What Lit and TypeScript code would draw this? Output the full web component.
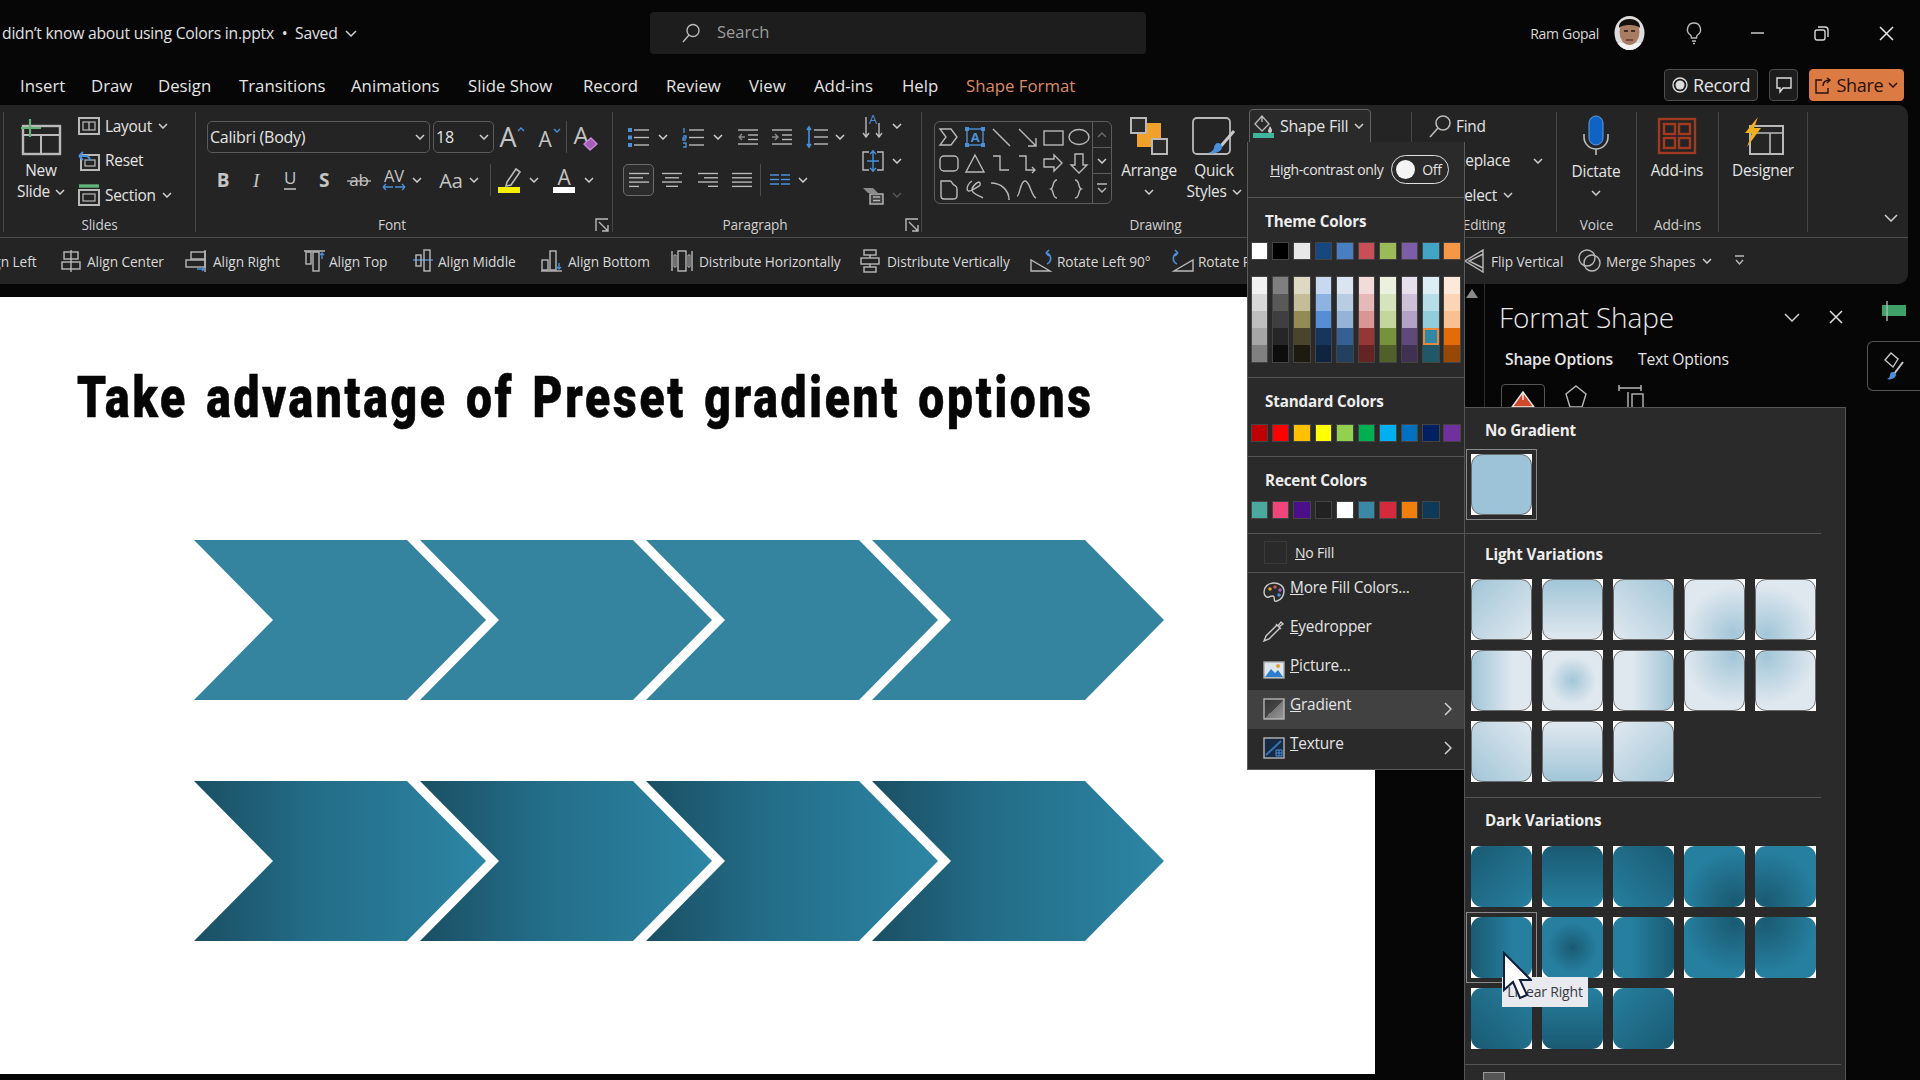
import { LitElement, html, css, svg, TemplateResult } from 'lit';
import { customElement } from 'lit/decorators.js';

const ic = (w: number, h: number, body: unknown) =>
  html`<svg class="ic" width=${w} height=${h} viewBox=${`0 0 ${w} ${h}`}>${body}</svg>`;
const chev = html`<svg class="chev" width="10" height="6" viewBox="0 0 10 6"><path d="M1 1l4 4 4-4"/></svg>`;
const cell = (w: number, c: unknown = '') => html`<span class="cell" style="width:${w}px">${c}</span>`;
const glyph = (t: string, x: number, y: number, size: number, extra = '') =>
  svg`<text x=${x} y=${y} font-size=${size} font-family="Open Sans" text-anchor="middle" fill="#c4c4c4" stroke="none" style=${extra}>${t}</text>`;
const BLUE = '#4a90d9';
const lines = (x: number, ws: number[], y0: number, st: number) =>
  ws.map((w, i) => svg`<path d=${`M${x} ${y0 + i * st}h${w}`}/>`);

// ribbon icons
const icons: Record<string, TemplateResult> = {
  newSlide: ic(42, 38, svg`<rect x="3" y="9" width="37" height="28" stroke-width="2.4"/><path d="M3 18h37M21 18v19" stroke-width="2"/><path d="M10 2v18M1 11h20" stroke="#62b37a" stroke-width="2.2"/>`),
  layout: ic(22, 18, svg`<rect x="1" y="1" width="20" height="16" stroke-width="2"/><rect x="5" y="5" width="12" height="8" stroke-width="1.2"/><path d="M11 5v8"/>`),
  reset: ic(22, 20, svg`<rect x="3" y="4" width="18" height="15" stroke-width="2"/><rect x="7" y="9" width="10" height="6" stroke-width="1.2"/><path d="M1 5l4-4M1 5l4 4M1 5h6q5 0 5 5" stroke=${BLUE} stroke-width="1.8"/>`),
  section: ic(22, 22, svg`<path d="M1 2h20" stroke="#62b37a" stroke-width="3.4"/><rect x="1" y="6" width="20" height="15" stroke-width="2"/><rect x="5" y="10" width="12" height="7" stroke-width="1.2"/>`),
  bullets: ic(22, 21, svg`${lines(7, [15, 15, 15], 3, 7.5)}<path d="M1 1h4v4H1zM1 8.5h4v4H1zM1 16h4v4H1z" fill=${BLUE} stroke="none"/>`),
  numbers: ic(22, 21, svg`${lines(7, [15, 15, 15], 3, 7.5)}<path d="M2 1v5M1 9h3v2H1v2h3M1 16h3v4H1" stroke=${BLUE}/>`),
  indentL: ic(22, 18, svg`${lines(1, [20], 2, 0)}${lines(11, [10, 10], 7, 4.5)}${lines(1, [20], 16, 0)}<path d="M8 9H2m3-3L2 9l3 3" stroke="#8a8a8a"/>`),
  indentR: ic(22, 18, svg`${lines(1, [20], 2, 0)}${lines(11, [10, 10], 7, 4.5)}${lines(1, [20], 16, 0)}<path d="M1 9h6m-3-3 3 3-3 3" stroke="#8a8a8a"/>`),
  spacing: ic(22, 22, svg`${lines(8, [14, 14, 14], 4, 7)}<path d="M3 1v20M1 4l2-3 2 3M1 18l2 3 2-3" stroke=${BLUE} stroke-width="1.6"/>`),
  textDir: ic(22, 26, svg`<path d="M4 4v20M1 20l3 4 3-4M17 10v14M14 20l3 4 3-4"/>${glyph('A', 11, 11, 13, 'fill:#4a90d9')}`),
  alignText: ic(22, 24, svg`<path d="M7 3H1v18h6M15 3h6v18h-6"/><path d="M11 1v22M8 5l3-3 3 3M8 19l3 3 3-3M5 12h12" stroke=${BLUE}/>`),
  smart: ic(22, 20, svg`<path d="M1 3h10l5 5H6z" fill="#8a8a8a" stroke="none"/><rect x="8" y="9" width="13" height="10" fill="#444"/>${lines(11, [7, 7], 12, 3.5)}`),
  aLeft: ic(22, 16, lines(1, [20, 14, 20, 10], 1.5, 4.3)),
  aCenter: ic(22, 16, lines(1, [20], 1.5, 0).concat(lines(4, [14], 5.8, 0), lines(1, [20], 10, 0), lines(5, [12], 14.3, 0))),
  aRight: ic(22, 16, lines(1, [20], 1.5, 0).concat(lines(7, [14], 5.8, 0), lines(1, [20], 10, 0), lines(11, [10], 14.3, 0))),
  aJust: ic(22, 16, lines(1, [20, 20, 20, 20], 1.5, 4.3)),
  cols: ic(22, 12, svg`<g stroke=${BLUE} stroke-width="1.5">${lines(1, [9, 9, 9], 1, 4.5)}${lines(12, [9, 9, 9], 1, 4.5)}</g>`),
  arrange: ic(38, 38, svg`<rect x="7" y="6" width="24" height="24" fill="#f0a02b" stroke="none"/><rect x="1" y="1" width="15" height="15" fill="#2b2b2b" stroke-width="2"/><rect x="22" y="22" width="15" height="15" fill="#2b2b2b" stroke-width="2"/>`),
  quick: ic(44, 38, svg`<rect x="1" y="1" width="37" height="36" rx="4" stroke-width="1.8"/><path d="M42 14 29 29" stroke="#c8c8c8" stroke-width="3"/><path d="M26 26c4 0 5 4 3 7-3 3-8 4-13 3 3-1 5-2 6-5 0-3 2-5 4-5z" fill=${BLUE} stroke="none"/>`),
  fill: ic(21, 24, svg`<path d="M9 2 2 10l7 7 7-7zM9 2v6"/><path d="M17 12c2 3 2 4 2 5a2 2 0 0 1-4 0c0-1 1-3 2-5z" fill="#c9c9c9" stroke="none"/><rect x="0" y="19" width="21" height="5" fill="#3fb59b" stroke="none"/>`),
  find: ic(22, 24, svg`<circle cx="14" cy="9" r="7" stroke-width="1.6"/><path d="M9 14 1 23" stroke-width="1.6"/>`),
  mic: ic(26, 40, svg`<rect x="6" y="1" width="14" height="29" rx="7" fill="#0f63c4" stroke="#5d9adf" stroke-width="1"/><path d="M1 19v3a12 12 0 0 0 24 0v-3M13 34v6" stroke="#bcbcbc" stroke-width="1.6"/>`),
  addins: ic(40, 38, svg`<g stroke="#a33a20" stroke-width="2.4"><rect x="2" y="2" width="36" height="34"/><rect x="7" y="7" width="11" height="10"/><rect x="22" y="7" width="11" height="10"/><rect x="7" y="21" width="11" height="10"/><rect x="22" y="21" width="11" height="10"/></g>`),
  designer: ic(42, 38, svg`<rect x="8" y="9" width="33" height="28" stroke-width="2"/><path d="M8 16h33M28 16v21" stroke-width="1.6"/><path d="M16 0 3 16h7L5 30l14-19h-7z" fill="#f2b01e" stroke="none"/>`),
};

const shapes = [
  svg`<path d="M2 3h11l6 8-6 8H2l6-8z"/>`,
  svg`<g stroke=${BLUE}><rect x="3" y="3" width="16" height="16"/></g><path d="M1 1h4v4H1zM17 1h4v4h-4zM1 17h4v4H1zM17 17h4v4h-4z" fill=${BLUE} stroke="none"/>${glyph('A', 11, 16, 13, 'fill:#4a90d9;font-weight:700')}`,
  svg`<path d="M3 3l17 17"/>`, svg`<path d="M3 3l17 17M20 12v8h-8"/>`,
  svg`<rect x="2" y="5" width="19" height="14"/>`, svg`<ellipse cx="11" cy="11" rx="10" ry="7.5"/>`,
  svg`<rect x="2" y="4" width="18" height="15" rx="4"/>`, svg`<path d="M11 3l9 17H2z"/>`,
  svg`<path d="M3 4h7v14h9"/>`, svg`<path d="M3 4h7v14h9M16 15l3 3-3 3"/>`,
  svg`<path d="M2 7h10V3l8 8-8 8v-4H2z"/>`, svg`<path d="M7 2h8v11h4l-8 8-8-8h4z"/>`,
  svg`<path d="M3 3h9c2 0 2 3 4 4s3 1 3 4v7c0 2-2 3-4 3H6c-2 0-3-1-3-3z"/>`, svg`<path d="M8 3c-6 4-7 13 0 9s9-4 8-7-8 3-8 7 8 6 11 8"/>`,
  svg`<path d="M1 5c9 0 18 6 18 17"/>`, svg`<path d="M1 18c3 0 3-15 8-15s6 15 11 17"/>`,
  svg`<path d="M15 2c-5 0-3 8-6 9 3 1 1 9 6 9"/>`, svg`<path d="M7 2c5 0 3 8 6 9-3 1-1 9-6 9"/>`,
];

type QatItem = { label: string; x: number; text: number; icon: unknown };
const rect = (x: number, y: number, w: number, h: number) => svg`<rect x=${x} y=${y} width=${w} height=${h}/>`;
const qat: QatItem[] = [
  { label: 'Align Left', x: -22, text: -22, icon: '' },
  { label: 'Align Center', x: 61, text: 87, icon: svg`<path d="M10 1v22"/>${rect(3, 3, 14, 7)}${rect(1, 13, 18, 7)}` },
  { label: 'Align Right', x: 186, text: 213, icon: svg`<path d="M19 1v22"/>${rect(5, 3, 14, 7)}${rect(0, 11, 19, 7)}<path d="M11 20h7m-2-2 2 2-2 2" stroke=${BLUE}/>` },
  { label: 'Align Top', x: 304, text: 329, icon: svg`<path d="M0 2h21"/>${rect(2, 3, 5, 12)}${rect(9, 3, 6, 19)}<path d="M18 10V4m-2 2 2-2 2 2" stroke=${BLUE}/>` },
  { label: 'Align Middle', x: 413, text: 438, icon: svg`<path d="M0 11h20" stroke=${BLUE}/>${rect(3, 6, 5, 11)}${rect(11, 1, 6, 21)}` },
  { label: 'Align Bottom', x: 541, text: 568, icon: svg`<path d="M0 22h21"/>${rect(1, 11, 6, 10)}${rect(9, 2, 6, 19)}<path d="M18 14v6m-2-2 2 2 2-2" stroke=${BLUE}/>` },
  { label: 'Distribute Horizontally', x: 671, text: 699, icon: svg`<path d="M1 2v20M21 2v20"/>${rect(7, 2, 8, 20)}<path d="M3 6h2v12H3zM17 6h2v12h-2z" stroke-width="1"/>` },
  { label: 'Distribute Vertically', x: 860, text: 887, icon: svg`${rect(4, 1, 12, 5)}${rect(1, 9, 18, 6)}${rect(4, 18, 12, 5)}<path d="M10 6v3M10 15v3"/>` },
  { label: 'Rotate Left 90°', x: 1030, text: 1057, icon: svg`<path d="M1 22h19L1 11z"/><path d="M16 4c6 1 6 9 1 11M16 4l3-3M16 4l3 3" stroke=${BLUE} stroke-width="1.6"/>` },
  { label: 'Rotate Right 90°', x: 1172, text: 1198, icon: svg`<path d="M21 22H2l19-11z"/><path d="M6 4C0 5 0 13 5 15M6 4 3 1M6 4 3 7" stroke=${BLUE} stroke-width="1.6"/>` },
  { label: 'Flip Vertical', x: 1463, text: 1491, icon: svg`<path d="M20 1v22L2 12zM20 5 6 12l14 7"/>` },
  { label: 'Merge Shapes', x: 1578, text: 1606, icon: svg`<circle cx="9" cy="9" r="8"/><circle cx="14" cy="14" r="8"/>` },
];

const tabs = [['Insert', 20], ['Draw', 91], ['Design', 158], ['Transitions', 239], ['Animations', 351], ['Slide Show', 468], ['Record', 583], ['Review', 666], ['View', 749], ['Add-ins', 814], ['Help', 902], ['Shape Format', 966]] as const;

const theme = ['#fff', '#000', '#e8e8e8', '#17477f', '#4a7ec2', '#c94f56', '#9bbb59', '#7b5ea7', '#41a5c6', '#f79646'];
const shades = [
  ['#f2f2f2', '#d9d9d9', '#bfbfbf', '#a6a6a6', '#808080'], ['#7f7f7f', '#595959', '#3f3f3f', '#262626', '#0d0d0d'],
  ['#ddd9c3', '#c4bd97', '#948a54', '#4a452a', '#1d1b10'], ['#c6d9f1', '#8db3e2', '#558ed5', '#17365d', '#0f243e'],
  ['#dbe5f1', '#b8cce4', '#95b3d7', '#366092', '#244061'], ['#f2dcdb', '#e5b9b7', '#d99694', '#953734', '#632423'],
  ['#ebf1de', '#d7e3bc', '#c3d69b', '#76923c', '#4f6128'], ['#e5e0ec', '#ccc1d9', '#b2a2c7', '#5f497a', '#3f3151'],
  ['#dbeef3', '#b7dde8', '#92cddc', '#31849b', '#205867'], ['#fde9d9', '#fbd5b5', '#fac08f', '#e36c09', '#974806'],
];
const standard = ['#c00000', '#ff0000', '#ffc000', '#ffff00', '#92d050', '#00b050', '#00b0f0', '#0070c0', '#002060', '#7030a0'];
const recent = ['#4aa89c', '#f0457a', '#4b0f8a', '#222222', '#ffffff', '#3a87a6', '#d42a3c', '#f07f0c', '#0f3a57'];

// 13 preset directions, in gallery order
const variations = (a: string, b: string) => [
  `linear-gradient(135deg,${a},${b})`, `linear-gradient(180deg,${a},${b})`, `linear-gradient(225deg,${a},${b})`,
  `radial-gradient(circle at 82% 92%,${a},${b} 68%)`, `radial-gradient(circle at 18% 92%,${a},${b} 68%)`,
  `linear-gradient(90deg,${a},${b} 70%)`, `radial-gradient(circle at 50% 50%,${a},${b} 58%)`, `linear-gradient(270deg,${a},${b} 70%)`,
  `radial-gradient(circle at 82% 8%,${a},${b} 68%)`, `radial-gradient(circle at 18% 8%,${a},${b} 68%)`,
  `linear-gradient(45deg,${a},${b})`, `linear-gradient(0deg,${a},${b})`, `linear-gradient(315deg,${a},${b})`,
];

const chevronRow = (fill: string) => svg`${[0, 1, 2, 3].map((i) => {
  const l = 226 * i;
  return svg`<polygon fill=${fill} points=${`${l},0 ${l + 213},0 ${l + 292},80 ${l + 213},160 ${l},160 ${l + 79},80`}/>`;
})}`;

@customElement('app-root')
export class AppRoot extends LitElement {
  static styles = css`
    :host { display: block; width: 1920px; height: 1080px; position: relative; overflow: hidden; background: #060606; color: #e4e4e4; font-family: 'Open Sans', 'Noto Sans', sans-serif; font-size: 15px; }
    svg { display: block; flex: none; }
    .ic { fill: none; stroke: #b9b9b9; stroke-width: 1.4; overflow: visible; }
    .chev { fill: none; stroke: #cfcfcf; stroke-width: 1.5; }

    .titlebar { height: 66px; display: flex; align-items: center; }
    .doc { width: 650px; padding-left: 2px; box-sizing: border-box; font-size: 15.7px; letter-spacing: -0.22px; color: #e0e0e0; display: flex; align-items: center; gap: 4px; white-space: pre; }
    .search { width: 496px; height: 42px; background: #1d1d1d; border-radius: 4px; display: flex; align-items: center; padding: 0 0 4px 32px; box-sizing: border-box; gap: 17px; color: #9c9c9c; font-size: 16.5px; }
    .search svg { margin-top: 3px; }
    .user { margin-left: auto; display: flex; align-items: center; font-size: 14px; color: #d8d8d8; letter-spacing: -0.3px; }
    .avatar { margin: 0 0 0 14px; }
    .bulb { margin-left: 40px; }
    .win { display: flex; margin-left: 49px; gap: 50px; padding-right: 26px; align-items: center; }

    .tabbar { height: 39px; display: flex; align-items: flex-start; position: relative; font-size: 16.8px; letter-spacing: 0; }
    .tabs { display: flex; width: 1664px; height: 32px; line-height: 40px; }
    .tab { flex: none; white-space: nowrap; }
    .tab.on { color: #dd8a6a; }
    .actions { display: flex; gap: 11px; margin-top: 3px; font-size: 18px; letter-spacing: -0.3px; }
    .btn { height: 32px; border: 1px solid #4d4d4d; background: #1d1d1d; border-radius: 4px; display: flex; align-items: center; justify-content: center; box-sizing: border-box; gap: 5px; }
    .btn.rec { width: 94px; }
    .btn.cmt { width: 29px; }
    .btn.share { width: 95px; background: #dc7a44; border-color: #dc7a44; color: #2a1208; }
    .btn.share .chev { stroke: #2a1208; }

    .ribbon { width: 1908px; height: 133px; background: #242424; border-radius: 0 10px 0 0; border-bottom: 1px solid #4c4c4c; box-sizing: border-box; padding: 7px 0 0 3px; display: flex; font-size: 15.4px; letter-spacing: -0.25px; }
    .group { flex: none; height: 120px; border-left: 1px solid #454545; box-sizing: border-box; display: flex; flex-direction: column; }
    .g-slides { width: 192px; }
    .g-font { width: 417px; }
    .g-para { width: 309px; }
    .g-draw { width: 490px; }
    .g-edit { width: 145px; }
    .g-voice { width: 80px; }
    .g-addin { width: 82px; }
    .g-design { width: 90px; border-right: 1px solid #454545; }
    .body { height: 106px; display: flex; flex: none; }
    .label { height: 14px; line-height: 14px; text-align: center; font-size: 13.6px; letter-spacing: -0.1px; color: #cfcfcf; position: relative; }
    .label.left { padding-right: 24px; }
    .launch { position: absolute; right: 3px; top: 0; }
    .big { display: flex; flex-direction: column; align-items: center; text-align: center; line-height: 21px; padding-top: 5px; box-sizing: border-box; flex: none; }
    .big .pic { height: 38px; margin-bottom: 5px; display: flex; align-items: flex-end; }
    .big .down { display: flex; justify-content: center; align-items: center; height: 21px; }
    .inl { display: inline-flex; align-items: center; gap: 5px; }
    .stack { display: flex; flex-direction: column; gap: 6.5px; }
    .srow { height: 28px; display: flex; align-items: center; gap: 5px; white-space: nowrap; }
    .srow svg.chev { margin-left: 1px; }
    .cell { flex: none; display: inline-flex; align-items: center; justify-content: center; }
    .frow { display: flex; align-items: center; height: 32px; }
    .rows { display: flex; flex-direction: column; gap: 11px; padding-top: 9px; }
    .vsep { width: 1px; height: 32px; background: #4c4c4c; flex: none; }
    .combo { height: 32px; border: 1px solid #5a5a5a; border-radius: 5px; box-sizing: border-box; display: flex; align-items: center; justify-content: space-between; padding: 0 4px 0 2px; font-size: 16px; flex: none; }
    .combo.font { width: 223px; margin-right: 3px; }
    .combo.size { width: 61px; }
    .selected { height: 32px; border: 1.5px solid #6c6c6c; border-radius: 5px; box-sizing: border-box; background: #2c2c2c; }
    .gallery { width: 178px; height: 83px; margin: 9px 0 0 12px; border: 1px solid #5c5c5c; border-radius: 6px; box-sizing: border-box; display: flex; flex: none; }
    .gal-grid { flex: 1; display: grid; grid-template-columns: repeat(6, 26px); grid-auto-rows: 26px; padding: 2px 0 0 1px; }
    .gal-grid span { display: flex; align-items: center; justify-content: center; }
    .gal-side { width: 21px; border-left: 1px solid #5c5c5c; display: grid; grid-template-rows: 26px 26px 1fr; }
    .gal-side span { display: flex; align-items: center; justify-content: center; border-bottom: 1px solid #5c5c5c; }
    .gal-side span:last-child { border-bottom: 0; }
    .fillbtn { width: 122px; height: 35px; border: 1px solid #636363; border-radius: 4px 4px 0 0; box-sizing: border-box; margin: -3px 0 0 7px; display: flex; align-items: center; gap: 6px; padding: 0 0 2px 3px; background: #2a2a2a; flex: none; font-size: 16px; }
    .collapse { align-self: flex-end; margin: 0 0 15px 76px; }

    .qat { width: 1908px; height: 46px; background: #242424; border-radius: 0 0 10px 0; position: relative; overflow: hidden; font-size: 13.7px; letter-spacing: -0.08px; color: #d8d8d8; }
    .q { position: absolute; top: 0; height: 46px; display: flex; align-items: center; white-space: nowrap; }
    .q span { position: absolute; }
    .work { display: flex; height: 796px; }
    .slide { width: 1375px; height: 777px; margin-top: 13px; background: #fff; flex: none; display: flex; flex-direction: column; overflow: hidden; }
    .slide h1 { margin: 71px 0 112px 77px; height: 60px; line-height: 60px; font-family: Roboto, 'Liberation Sans', sans-serif; font-weight: 900; font-size: 57px; letter-spacing: 3.4px; word-spacing: 5px; color: #060606; -webkit-text-stroke: 0.6px #060606; white-space: nowrap; transform: scaleX(0.81); transform-origin: left center; }
    .chevrons { margin-left: 194px; flex: none; }
    .chevrons + .chevrons { margin-top: 81px; }
    .gutter { width: 109px; flex: none; padding: 5px 0 0 91px; box-sizing: border-box; }
    .tri { width: 0; height: 0; border: 6px solid transparent; border-top: 0; border-bottom: 9px solid #8a8a8a; }
    .pane { width: 383px; flex: none; border-left: 1px solid #2e2e2e; box-sizing: border-box; padding: 12px 0 0 14px; }
    .pane-head { display: flex; align-items: center; height: 42px; font-size: 28px; font-weight: 300; letter-spacing: -0.1px; color: #e8e8e8; padding-right: 24px; }
    .pane-head .x { margin-left: 29px; }
    .pane-head .v { margin-left: auto; }
    .pane-tabs { display: flex; height: 40px; align-items: center; margin-top: 1px; padding-left: 6px; font-size: 15.7px; letter-spacing: -0.2px; }
    .pane-tabs b { width: 133px; font-weight: 600; }
    .pane-icons { display: flex; align-items: flex-start; gap: 19px; margin-top: 5px; padding-left: 2px; height: 40px; }
    .pane-icons .cur { width: 44px; height: 44px; border: 1px solid #555; border-radius: 4px; box-sizing: border-box; display: flex; justify-content: center; padding-top: 6px; }
    .pane-icons .sz { margin-left: 9px; }
    .rail { flex: 1; padding-top: 17px; }
    .rail-a { display: flex; justify-content: center; height: 40px; align-items: flex-start; }
    .rail-b { height: 50px; border: 1px solid #555; border-right: 0; border-radius: 6px 0 0 6px; box-sizing: border-box; display: flex; justify-content: center; align-items: center; }

    .menu { position: absolute; left: 1247px; top: 142px; width: 218px; height: 628px; background: #2a2a2a; border: 1px solid #5a5a5a; border-top: 0; box-sizing: border-box; font-size: 15.4px; letter-spacing: -0.2px; }
    .hc { height: 56px; display: flex; align-items: center; padding-left: 22px; gap: 8px; font-size: 14px; letter-spacing: -0.35px; border-bottom: 1px solid #555; box-sizing: border-box; }
    .toggle { width: 58px; height: 29px; border: 1.5px solid #e0e0e0; border-radius: 15px; box-sizing: border-box; display: flex; align-items: center; padding-left: 4px; gap: 7px; font-size: 14px; }
    .knob { width: 19px; height: 19px; background: #f4f4f4; border-radius: 50%; }
    .mhead { height: 45px; line-height: 46px; padding-left: 17px; font-weight: 700; font-size: 15.2px; letter-spacing: -0.15px; color: #eee; }
    .mhead.tall { height: 46.5px; }
    .sw { display: grid; grid-template-columns: repeat(10, 15.5px); column-gap: 5.95px; padding-left: 3.5px; }
    .sw i { display: block; height: 16px; outline: 1px solid #444; }
    .shade { display: grid; grid-template-columns: repeat(10, 15.5px); column-gap: 5.95px; padding: 18px 0 0 3.5px; }
    .shade div { outline: 1px solid #444; }
    .shade i { display: block; height: 17px; }
    .shade i.mark { outline: 2px solid #e8883a; outline-offset: -2px; background: #2e88a8 !important; }
    .sec { border-bottom: 1px solid #555; padding-bottom: 15px; }
    .nofill { height: 39px; border-bottom: 1px solid #555; display: flex; align-items: center; padding-left: 16px; gap: 8px; box-sizing: border-box; font-size: 14px; }
    .nofill i { width: 21px; height: 21px; border: 1px solid #3a3a3a; }
    .item { height: 39px; display: flex; align-items: center; padding: 0 12px 0 15px; }
    .item span { padding: 0 0 10px 5px; flex: 1; }
    .item.hot { background: #414141; }
    .arrow { fill: none; stroke: #d0d0d0; stroke-width: 1.5; }

    .submenu { position: absolute; left: 1464px; top: 407px; width: 382px; height: 673px; background: #2a2a2a; border: 1px solid #555; border-bottom: 0; box-sizing: border-box; padding-left: 6px; overflow: hidden; }
    .shead { height: 44px; line-height: 44px; padding-left: 14px; font-weight: 700; font-size: 15.2px; letter-spacing: -0.15px; color: #eee; }
    .shead.n { margin-top: -2px; height: 42px; }
    .grid { display: grid; grid-template-columns: repeat(5, 61px); gap: 10px; margin-top: 5px; }
    .grid.dk { margin-top: 4px; }
    .tile { width: 61px; height: 61px; background: #fff; }
    .tile i { display: block; width: 100%; height: 100%; border-radius: 11px; box-sizing: border-box; }
    .tile.lt i { border: 1.5px solid #6b6b6b; }
    .tile.sel { outline: 1px solid #8a8a8a; outline-offset: 4px; }
    .hr { height: 1px; background: #555; width: 356px; margin-left: -6px; }
    .first { margin: 2px 0 18px; }
    .lv { margin-top: 15px; }
    .hr.full { width: 376px; }
    .tail { margin: 7px 0 0 12px; width: 20px; height: 14px; border: 1.5px solid #9a9a9a; background: #555; }
    .tooltip { position: absolute; left: 1502px; top: 977px; width: 86px; height: 30px; background: #e9e9f0; color: #3a3a3a; font-size: 14px; line-height: 30px; text-align: center; letter-spacing: -0.2px; }
    .cursor { position: absolute; left: 1502px; top: 951px; }
  `;

  private renderRibbon() {
    const launcher = ic(14, 14, svg`<path d="M1 13V1h12M4 4l9 9M7 13h6V7"/>`);
    return html`<div class="ribbon">
      <div class="group g-slides">
        <div class="body">
          <div class="big" style="width:66px;margin-left:4px">
            <div class="pic">${icons.newSlide}</div>New<span class="inl">Slide ${chev}</span>
          </div>
          <div class="stack" style="margin-left:4px">
            <div class="srow">${icons.layout}Layout ${chev}</div>
            <div class="srow">${icons.reset}Reset</div>
            <div class="srow">${icons.section}Section ${chev}</div>
          </div>
        </div>
        <div class="label">Slides</div>
      </div>
      <div class="group g-font">
        <div class="body" style="padding-left:11px">
          <div class="rows">
            <div class="frow">
              <div class="combo font">Calibri (Body) ${chev}</div>
              <div class="combo size">18 ${chev}</div>
              ${cell(36, ic(32, 28, svg`${glyph('A', 12, 24, 27)}<path d="M22 8l3-3 3 3" stroke=${BLUE}/>`))}
              ${cell(36, ic(30, 24, svg`${glyph('A', 12, 22, 21)}<path d="M21 4l3 3 3-3" stroke=${BLUE}/>`))}
              <span class="vsep"></span>
              ${cell(36, ic(30, 28, svg`${glyph('A', 11, 21, 24)}<path d="M21 15l6 6-7 6-6-6z" fill="#a35fb5" stroke="#c988d8"/>`))}
            </div>
            <div class="frow">
              ${cell(32, ic(14, 20, glyph('B', 7, 17, 19, 'font-weight:700')))}
              ${cell(34, ic(14, 20, glyph('I', 7, 17, 19, 'font-style:italic;font-family:Liberation Serif')))}
              ${cell(34, ic(16, 22, svg`${glyph('U', 8, 15, 17)}<path d="M2 20h12" stroke-width="1.6"/>`))}
              ${cell(34, ic(14, 20, glyph('S', 7, 17, 19, 'font-weight:700')))}
              ${cell(36, ic(24, 20, svg`${glyph('ab', 12, 16, 17)}<path d="M0 11h24"/>`))}
              ${cell(33, ic(24, 24, svg`${glyph('AV', 12, 14, 16.5)}<path d="M1 19h10M1 19l3-3M1 19l3 3M13 19h10M23 19l-3-3M23 19l-3 3" stroke=${BLUE}/>`))}
              ${cell(14, chev)}${cell(10)}
              ${cell(34, ic(30, 22, glyph('Aa', 15, 19, 20)))}
              ${cell(12, chev)}${cell(10)}
              <span class="vsep"></span>${cell(6)}
              ${cell(25, ic(23, 26, svg`<path d="M9 15 18 2l4 3-9 13-5 1z" stroke-width="1.6"/><rect x="0" y="20" width="22" height="6" fill="#f5f000" stroke="none"/>`))}
              ${cell(5)}${cell(14, chev)}${cell(12)}
              ${cell(22, ic(22, 26, svg`${glyph('A', 11, 18, 21)}<rect x="0" y="20" width="22" height="6" fill="#fff" stroke="none"/>`))}
              ${cell(7)}${cell(14, chev)}
            </div>
          </div>
        </div>
        <div class="label left">Font<span class="launch">${launcher}</span></div>
      </div>
      <div class="group g-para">
        <div class="body" style="padding-left:14px">
          <div class="rows" style="width:235px">
            <div class="frow">
              ${cell(22, icons.bullets)}${cell(28, chev)}${cell(5)}${cell(22, icons.numbers)}${cell(28, chev)}${cell(5)}
              ${cell(22, icons.indentL)}${cell(12)}${cell(22, icons.indentR)}${cell(13)}${cell(22, icons.spacing)}${cell(24, chev)}
            </div>
            <div class="frow" style="margin-left:-4px">
              ${cell(31, html`<div class="selected cell" style="width:31px">${icons.aLeft}</div>`)}${cell(7)}
              ${cell(22, icons.aCenter)}${cell(14)}${cell(22, icons.aRight)}${cell(12)}${cell(22, icons.aJust)}${cell(7)}
              <span class="vsep"></span>${cell(8)}${cell(22, icons.cols)}${cell(24, chev)}
            </div>
          </div>
          <div class="stack">
            <div class="srow" style="gap:7px">${icons.textDir}${chev}</div>
            <div class="srow" style="gap:7px">${icons.alignText}${chev}</div>
            <div class="srow" style="gap:7px">${icons.smart}<svg class="chev" style="stroke:#555" width="10" height="6" viewBox="0 0 10 6"><path d="M1 1l4 4 4-4"/></svg></div>
          </div>
        </div>
        <div class="label left">Paragraph<span class="launch" style="right:2px">${launcher}</span></div>
      </div>
      <div class="group g-draw">
        <div class="body">
          <div class="gallery">
            <div class="gal-grid">${shapes.map((s) => html`<span>${ic(22, 22, s)}</span>`)}</div>
            <div class="gal-side">
              <span><svg class="chev" style="stroke:#666" width="10" height="6" viewBox="0 0 10 6"><path d="M1 5l4-4 4 4"/></svg></span>
              <span>${chev}</span>
              <span>${ic(12, 12, svg`<path d="M1 1h10M2 5l4 4 4-4"/>`)}</span>
            </div>
          </div>
          <div class="big" style="width:74px">
            <div class="pic">${icons.arrange}</div>Arrange<span class="down">${chev}</span>
          </div>
          <div class="big" style="width:56px">
            <div class="pic">${icons.quick}</div>Quick<span class="inl">Styles ${chev}</span>
          </div>
          <div class="fillbtn">${icons.fill}Shape Fill ${chev}</div>
        </div>
        <div class="label" style="padding-right:22px">Drawing</div>
      </div>
      <div class="group g-edit">
        <div class="body" style="padding-left:17px">
          <div class="stack">
            <div class="srow">${icons.find}Find</div>
            <div class="srow" style="padding-left:27px;gap:22px">Replace ${chev}</div>
            <div class="srow" style="padding-left:27px">Select ${chev}</div>
          </div>
        </div>
        <div class="label">Editing</div>
      </div>
      <div class="group g-voice">
        <div class="body"><div class="big" style="width:78px;padding-top:3px"><div class="pic" style="height:40px;margin-bottom:6px">${icons.mic}</div>Dictate<span class="down">${chev}</span></div></div>
        <div class="label">Voice</div>
      </div>
      <div class="group g-addin">
        <div class="body"><div class="big" style="width:80px"><div class="pic">${icons.addins}</div>Add-ins</div></div>
        <div class="label">Add-ins</div>
      </div>
      <div class="group g-design">
        <div class="body"><div class="big" style="width:88px"><div class="pic">${icons.designer}</div>Designer</div></div>
      </div>
      <svg class="chev collapse" width="14" height="8" viewBox="0 0 14 8"><path d="M1 1l6 6 6-6"/></svg>
    </div>`;
  }

  private renderFillMenu() {
    const arrow = html`<svg class="arrow" width="8" height="14" viewBox="0 0 8 14"><path d="M1 1l6 6-6 6"/></svg>`;
    return html`<div class="menu">
      <div class="hc"><span><u>H</u>igh-contrast only</span><div class="toggle"><i class="knob"></i>Off</div></div>
      <div class="sec">
        <div class="mhead">Theme Colors</div>
        <div class="sw">${theme.map((c) => html`<i style="background:${c}"></i>`)}</div>
        <div class="shade">${shades.map((col, x) => html`<div>${col.map((c, y) =>
          html`<i class=${x === 8 && y === 3 ? 'mark' : ''} style="background:${c}"></i>`)}</div>`)}</div>
      </div>
      <div class="sec">
        <div class="mhead tall">Standard Colors</div>
        <div class="sw">${standard.map((c) => html`<i style="background:${c}"></i>`)}</div>
      </div>
      <div class="sec">
        <div class="mhead">Recent Colors</div>
        <div class="sw">${recent.map((c) => html`<i style="background:${c}"></i>`)}</div>
      </div>
      <div class="nofill"><i></i><span><u>N</u>o Fill</span></div>
      <div class="items">
        <div class="item">${ic(22, 22, svg`<path d="M11 2C5 2 1 6 1 11c0 4 3 6 5 5s4-2 5 0-1 5 3 4 7-5 7-10-5-8-10-8z" stroke="#c9c9c9"/><circle cx="7" cy="8" r="1.8" fill="#e0a030" stroke="none"/><circle cx="12" cy="6" r="1.8" fill="#d05050" stroke="none"/><circle cx="17" cy="9" r="1.8" fill="#a060c0" stroke="none"/><circle cx="16" cy="14" r="1.8" fill="#4a90d9" stroke="none"/>`)}<span><u>M</u>ore Fill Colors...</span></div>
        <div class="item">${ic(22, 22, svg`<path d="M1 21l2-5L14 5l3 3L6 19zM13 4l5 5M15 6l3-4 2 2-4 3" stroke="#c9c9c9"/>`)}<span><u>E</u>yedropper</span></div>
        <div class="item">${ic(22, 18, svg`<rect x="1" y="1" width="20" height="16" fill="#dfe6ee" stroke="#aaa"/><path d="M2 16l6-8 4 4 3-3 5 7z" fill="#2b7fd0" stroke="none"/><circle cx="15" cy="5" r="2" fill="#e0a030" stroke="none"/>`)}<span><u>P</u>icture...</span></div>
        <div class="item hot">${ic(22, 22, svg`<defs><linearGradient id="gi" x1="0" y1="0" x2="1" y2="1"><stop offset="0" stop-color="#333"/><stop offset=".5" stop-color="#444"/><stop offset=".5" stop-color="#777"/><stop offset="1" stop-color="#999"/></linearGradient></defs><rect x="1" y="1" width="20" height="20" fill="url(#gi)" stroke="#b5b5b5"/>`)}<span><u>G</u>radient</span>${arrow}</div>
        <div class="item">${ic(22, 22, svg`<rect x="1" y="1" width="20" height="20" fill="#172a44" stroke="#b5b5b5"/><path d="M3 18 18 4" stroke="#3a70b0" stroke-width="2"/><path d="M13 13h6v6h-6zM16 13v6M13 16h6" stroke="#4a90d9" stroke-width="1"/>`)}<span><u>T</u>exture</span>${arrow}</div>
      </div>
    </div>`;
  }

  private renderGradients() {
    const tile = (bg: string, cls = '') => html`<div class="tile ${cls}"><i style="background:${bg}"></i></div>`;
    return html`<div class="submenu">
      <div class="shead">No Gradient</div>
      <div class="first">${tile('#9cc3d7', 'lt sel')}</div>
      <div class="hr"></div>
      <div class="shead n">Light Variations</div>
      <div class="grid">${variations('#a2c6d8', '#e0e8ef').map((g) => tile(g, 'lt'))}</div>
      <div class="hr lv"></div>
      <div class="shead">Dark Variations</div>
      <div class="grid dk">${variations('#1a5a72', '#267f9f').map((g, i) => tile(g, i === 5 ? 'sel' : ''))}</div>
      <div class="hr lv full"></div>
      <div class="tail"></div>
    </div>`;
  }

  render() {
    return html`
      <div class="titlebar">
        <div class="doc">didn’t know about using Colors in.pptx  •  Saved <svg class="chev" width="12" height="7" viewBox="0 0 12 7"><path d="M1 1l5 5 5-5"/></svg></div>
        <div class="search">${ic(18, 20, svg`<circle cx="11" cy="7.5" r="6"/><path d="M7 12 1 19"/>`)}Search</div>
        <div class="user">Ram Gopal
          <svg class="avatar" width="33" height="34" viewBox="0 0 33 34">
            <defs><clipPath id="av"><ellipse cx="16.500" cy="17" rx="15" ry="17"/></clipPath></defs>
            <g clip-path="url(#av)"><rect width="33" height="34" fill="#dcdcdc"/><rect x="0" y="27" width="33" height="7" fill="#f2f2f2"/><ellipse cx="16.500" cy="16" rx="10" ry="13" fill="#a87c62"/><path d="M6 12C5 0 28 0 27 12c-3-4-18-4-21 0z" fill="#14100d"/><path d="M11 15h4M18 15h4" stroke="#241509" stroke-width="1.6"/><path d="M13 24h7" stroke="#5f372a" stroke-width="1.6"/></g>
          </svg>
        </div>
        <div class="bulb">${ic(16, 22, svg`<path d="M8 1a6.5 6.5 0 0 0-3.5 12c1 1 1 2 1 3h5c0-1 0-2 1-3A6.5 6.5 0 0 0 8 1zM6 19h4M7 21.500h2"/>`)}</div>
        <div class="win">
          ${ic(13, 2, svg`<path d="M0 1h13" stroke="#d8d8d8"/>`)}
          ${ic(15, 15, svg`<rect x="1" y="4" width="10" height="10" rx="2" stroke="#d8d8d8"/><path d="M4 1h7a3 3 0 0 1 3 3v7" stroke="#d8d8d8"/>`)}
          ${ic(15, 15, svg`<path d="M1 1l13 13M14 1 1 14" stroke="#e8e8e8" stroke-width="1.5"/>`)}
        </div>
      </div>
      <div class="tabbar">
        <div class="tabs">${tabs.map(([t, x], i) => html`<span class="tab ${t === 'Shape Format' ? 'on' : ''}" style="width:${(tabs[i + 1]?.[1] ?? 1664) - x}px;${i === 0 ? 'margin-left:20px' : ''}">${t}</span>`)}</div>
        <div class="actions">
          <div class="btn rec">${ic(16, 16, svg`<circle cx="8" cy="8" r="7" stroke="#ddd"/><circle cx="8" cy="8" r="4.500" fill="#ddd" stroke="none"/>`)}Record</div>
          <div class="btn cmt">${ic(16, 16, svg`<path d="M1 1h14v10H7l-3 4v-4H1z" stroke="#ddd"/>`)}</div>
          <div class="btn share">${ic(17, 17, svg`<path d="M7 3H1v13h12v-5M8 9c0-4 3-6 7-6M12 1l3 2-3 3" stroke="#2a1208"/>`)}Share ${chev}</div>
        </div>
      </div>
      ${this.renderRibbon()}
      <div class="qat">
        ${qat.map((q) => html`<div class="q" style="left:${q.x}px">${q.icon ? ic(22, 24, q.icon) : ''}<span style="left:${q.text - q.x}px">${q.label}</span></div>`)}
        <div class="q" style="left:1702px">${chev}</div>
        <div class="q" style="left:1734px">${ic(11, 12, svg`<path d="M1 1h9M2 5l3.500 4L9 5"/>`)}</div>
      </div>
      <div class="work">
        <div class="slide">
          <h1>Take advantage of Preset gradient options</h1>
          <svg class="chevrons" width="970" height="160" viewBox="0 0 970 160">${chevronRow('#34839f')}</svg>
          <svg class="chevrons" width="970" height="160" viewBox="0 0 970 160">
            <defs><linearGradient id="lr"><stop offset="0" stop-color="#1a4f63"/><stop offset=".4" stop-color="#236c87"/><stop offset="1" stop-color="#2c86a5"/></linearGradient></defs>
            ${chevronRow('url(#lr)')}
          </svg>
        </div>
        <div class="gutter"><div class="tri"></div></div>
        <div class="pane">
          <div class="pane-head">Format Shape
            <svg class="chev v" width="16" height="9" viewBox="0 0 16 9"><path d="M1 1l7 7 7-7"/></svg>
            <span class="x">${ic(14, 14, svg`<path d="M1 1l12 12M13 1 1 13" stroke="#e0e0e0" stroke-width="1.5"/>`)}</span>
          </div>
          <div class="pane-tabs"><b>Shape Options</b><span>Text Options</span></div>
          <div class="pane-icons">
            <div class="cur">${ic(26, 26, svg`<path d="M13 1 2 16h22z" fill="#d0492a" stroke="#eee"/><path d="M13 1v8" stroke="#eee"/>`)}</div>
            ${ic(24, 26, svg`<path d="M12 2 22 10l-4 13H6L2 10z"/>`)}
            <span class="sz">${ic(28, 26, svg`<path d="M3 4h22M3 1v6M25 1v6M12 8v16"/><rect x="16" y="10" width="11" height="14"/>`)}</span>
          </div>
        </div>
        <div class="rail">
          <div class="rail-a">${ic(24, 20, svg`<rect x="0" y="4" width="24" height="11" fill="#3fa06a" stroke="none"/><path d="M5 0v20" stroke="#b5b5b5"/>`)}</div>
          <div class="rail-b">${ic(24, 30, svg`<path d="M3 9l6-7 7 6-5 8z" stroke="#c8c8c8"/><path d="M21 11 12 23" stroke="#c8c8c8" stroke-width="2"/><path d="M11 21c3 0 4 3 2 5-2 2-5 3-8 2 2-1 3-2 3-4 0-2 1-3 3-3z" fill=${BLUE} stroke="none"/>`)}</div>
        </div>
      </div>
      ${this.renderFillMenu()}
      ${this.renderGradients()}
      <div class="tooltip">Linear Right</div>
      <svg class="cursor" width="30" height="50" viewBox="0 0 30 50"><path d="M2 2v37l9-8 7 16 7-3-7-15h11z" fill="#fff" stroke="#10203a" stroke-width="2"/></svg>
    `;
  }
}
